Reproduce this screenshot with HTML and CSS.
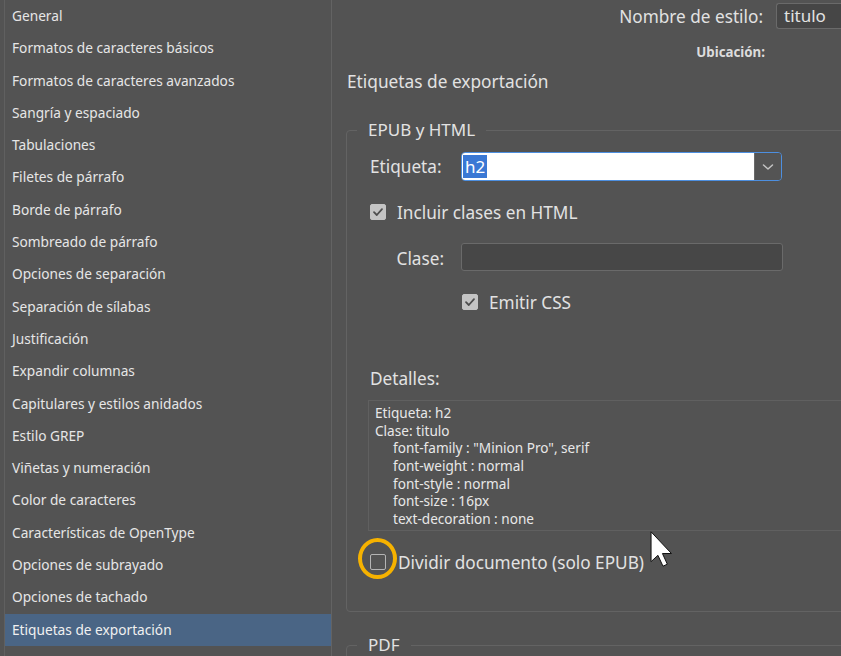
FILE: index.html
```html
<!DOCTYPE html>
<html lang="es">
<head>
<meta charset="utf-8">
<title>Opciones de estilo de párrafo</title>
<link rel="stylesheet" href="styles.css">
</head>
<body>
<div class="app">
  <nav class="sidebar">
    <ul class="nav-list">
      <li class="nav-item">General</li>
      <li class="nav-item">Formatos de caracteres básicos</li>
      <li class="nav-item">Formatos de caracteres avanzados</li>
      <li class="nav-item">Sangría y espaciado</li>
      <li class="nav-item">Tabulaciones</li>
      <li class="nav-item">Filetes de párrafo</li>
      <li class="nav-item">Borde de párrafo</li>
      <li class="nav-item">Sombreado de párrafo</li>
      <li class="nav-item">Opciones de separación</li>
      <li class="nav-item">Separación de sílabas</li>
      <li class="nav-item">Justificación</li>
      <li class="nav-item">Expandir columnas</li>
      <li class="nav-item">Capitulares y estilos anidados</li>
      <li class="nav-item">Estilo GREP</li>
      <li class="nav-item">Viñetas y numeración</li>
      <li class="nav-item">Color de caracteres</li>
      <li class="nav-item">Características de OpenType</li>
      <li class="nav-item">Opciones de subrayado</li>
      <li class="nav-item">Opciones de tachado</li>
      <li class="nav-item selected">Etiquetas de exportación</li>
    </ul>
  </nav>
  <main class="panel">
    <div class="name-row">
      <span class="name-label">Nombre de estilo:</span>
      <div class="name-input">titulo</div>
    </div>
    <div class="loc-row">Ubicación:</div>
    <div class="section-title">Etiquetas de exportación</div>

    <fieldset class="group">
      <legend class="group-legend">EPUB y HTML</legend>
      <div class="group-body">
        <div class="field-row tag-row">
          <span class="field-label">Etiqueta:</span>
          <div class="select">
            <div class="select-value"><span class="sel-text">h2</span></div>
            <div class="select-btn">
              <svg width="12" height="8" viewBox="0 0 12 8"><path d="M1.5 2 L6 6 L10.5 2" fill="none" stroke="#c4c4c4" stroke-width="1.5" stroke-linecap="round" stroke-linejoin="round"/></svg>
            </div>
          </div>
        </div>

        <div class="check-row include-row">
          <span class="checkbox checked">
            <svg width="12" height="10" viewBox="0 0 12 10"><path d="M2 5.2 L4.8 8 L10 2.2" fill="none" stroke="#4e4e4e" stroke-width="1.8" stroke-linecap="round" stroke-linejoin="round"/></svg>
          </span>
          <span class="check-label">Incluir clases en HTML</span>
        </div>

        <div class="field-row class-row">
          <span class="field-label">Clase:</span>
          <div class="text-input"></div>
        </div>

        <div class="check-row css-row">
          <span class="checkbox checked">
            <svg width="12" height="10" viewBox="0 0 12 10"><path d="M2 5.2 L4.8 8 L10 2.2" fill="none" stroke="#4e4e4e" stroke-width="1.8" stroke-linecap="round" stroke-linejoin="round"/></svg>
          </span>
          <span class="check-label">Emitir CSS</span>
        </div>

        <div class="details-title">Detalles:</div>
        <div class="details-box">
          <div class="dl">Etiqueta: h2</div>
          <div class="dl">Clase: titulo</div>
          <div class="dl indent">font-family : "Minion Pro", serif</div>
          <div class="dl indent">font-weight : normal</div>
          <div class="dl indent">font-style : normal</div>
          <div class="dl indent">font-size : 16px</div>
          <div class="dl indent">text-decoration : none</div>
        </div>

        <div class="check-row split-row">
          <span class="checkbox highlight-target">
            <span class="ring"></span>
          </span>
          <span class="check-label">Dividir documento (solo EPUB)</span>
          <svg class="cursor" width="24" height="38" viewBox="0 0 13 21"><path d="M1 1 V17.5 L4.8 14 L7.6 20 L10 18.9 L7.3 13 H12.3 Z" fill="#ffffff" stroke="#111" stroke-width="1" stroke-linejoin="round" vector-effect="non-scaling-stroke"/></svg>
        </div>
      </div>
    </fieldset>

    <fieldset class="group pdf">
      <legend class="group-legend">PDF</legend>
      <div class="group-body pdf-body"></div>
    </fieldset>
  </main>
</div>
</body>
</html>
```

FILE: styles.css
```css
* { box-sizing: border-box; }
html, body {
  margin: 0;
  padding: 0;
  width: 841px;
  height: 656px;
  overflow: hidden;
  background: #535353;
}
body {
  font-family: "Noto Sans", "Open Sans", sans-serif;
  color: #e2e2e2;
}
.app {
  display: flex;
  height: 656px;
  padding-left: 4px;
}
.sidebar {
  width: 328px;
  flex: 0 0 328px;
  height: 680px;
  border-left: 1px solid #606060;
  border-right: 1px solid #636363;
  background: #535353;
}
.nav-list {
  list-style: none;
  margin: 0;
  padding: 0;
}
.nav-item {
  height: 32.3px;
  line-height: 32.3px;
  padding-left: 7px;
  font-size: 13.7px;
  color: #e6e6e6;
  white-space: nowrap;
}
.nav-item.selected {
  background: #4a6585;
  color: #f0f0f0;
}
.panel {
  width: 540px;
  flex: 0 0 540px;
  padding: 3px 0 0 14px;
}
.name-row {
  display: flex;
  justify-content: flex-end;
  align-items: center;
  height: 26px;
  gap: 13px;
}
.name-label { font-size: 17.2px; }
.name-input {
  width: 96px;
  height: 26px;
  line-height: 24px;
  padding-left: 7px;
  background: #464646;
  border: 1px solid #6a6a6a;
  border-radius: 3px 0 0 3px;
  border-right: none;
  font-size: 17px;
}
.loc-row {
  margin-top: 14px;
  height: 18px;
  line-height: 18px;
  text-align: right;
  padding-right: 107px;
  font-size: 13.3px;
  font-weight: bold;
  color: #dcdcdc;
}
.section-title {
  margin-top: 10px;
  height: 22px;
  line-height: 22px;
  font-size: 17.3px;
  padding-left: 1px;
}
.group {
  margin: 26px 0 0 0;
  padding: 0 0 37px 10px;
  border: 1px solid #636363;
  border-radius: 4px;
  min-width: 0;
}
.group-legend {
  padding: 0 11px;
  height: 22px;
  line-height: 22px;
  font-size: 17px;
}
.group-body {
  padding-left: 13px;
}
.field-row {
  display: flex;
  align-items: center;
  gap: 17px;
}
.field-label {
  width: 74px;
  flex: 0 0 74px;
  text-align: right;
  font-size: 17.2px;
  white-space: nowrap;
}
.tag-row {
  margin-top: 11px;
  height: 29px;
}
.tag-row .field-label { text-align: left; }
.select {
  width: 321px;
  height: 29px;
  display: flex;
  border: 1.5px solid #4d8fe0;
  border-radius: 4px;
  overflow: hidden;
}
.select-value {
  flex: 1;
  background: #ffffff;
  display: flex;
  align-items: center;
  padding-left: 1px;
}
.sel-text {
  background: #3a78d4;
  color: #ffffff;
  font-size: 17px;
  line-height: 23px;
  padding: 0 2px;
}
.select-btn {
  width: 27px;
  background: #545454;
  display: flex;
  align-items: center;
  justify-content: center;
  border-left: 1px solid #6a6a6a;
}
.check-row {
  display: flex;
  align-items: center;
  height: 24px;
  gap: 11px;
}
.checkbox {
  width: 16px;
  height: 16px;
  flex: 0 0 16px;
  border-radius: 2px;
  border: 1.5px solid #b4b4b4;
  display: flex;
  align-items: center;
  justify-content: center;
}
.checkbox.checked {
  background: #c4c4c4;
  border-color: #c4c4c4;
}
.check-label { font-size: 17.2px; white-space: nowrap; }
.include-row { margin-top: 19px; }
.class-row {
  margin-top: 19px;
  height: 28px;
}
.class-row .field-label { padding-top: 2px; }
.text-input {
  width: 322px;
  height: 28px;
  background: #474747;
  border: 1px solid #6a6a6a;
  border-radius: 3px;
}
.css-row {
  margin-top: 19px;
  padding-left: 92px;
}
.details-title {
  margin-top: 54px;
  height: 22px;
  line-height: 22px;
  font-size: 17.2px;
}
.details-box {
  margin: 10px 0 0 -2px;
  height: 131px;
  padding: 3px 0 0 6px;
  border: 1px solid #606060;
  border-right: none;
  font-size: 13.6px;
  color: #e8e8e8;
}
.dl {
  height: 17.67px;
  line-height: 17.67px;
  white-space: nowrap;
}
.dl.indent { padding-left: 18px; }
.split-row {
  margin-top: 19px;
  gap: 12px;
  position: relative;
}
.highlight-target { position: relative; }
.ring {
  position: absolute;
  left: -13px;
  top: -17px;
  width: 39px;
  height: 41px;
  border: 4.5px solid #f6b200;
  border-radius: 50%;
}
.cursor {
  position: absolute;
  left: 279px;
  top: -20px;
}
.pdf {
  margin-top: 22px;
  padding-bottom: 0;
}
.pdf-body { height: 20px; }
```
